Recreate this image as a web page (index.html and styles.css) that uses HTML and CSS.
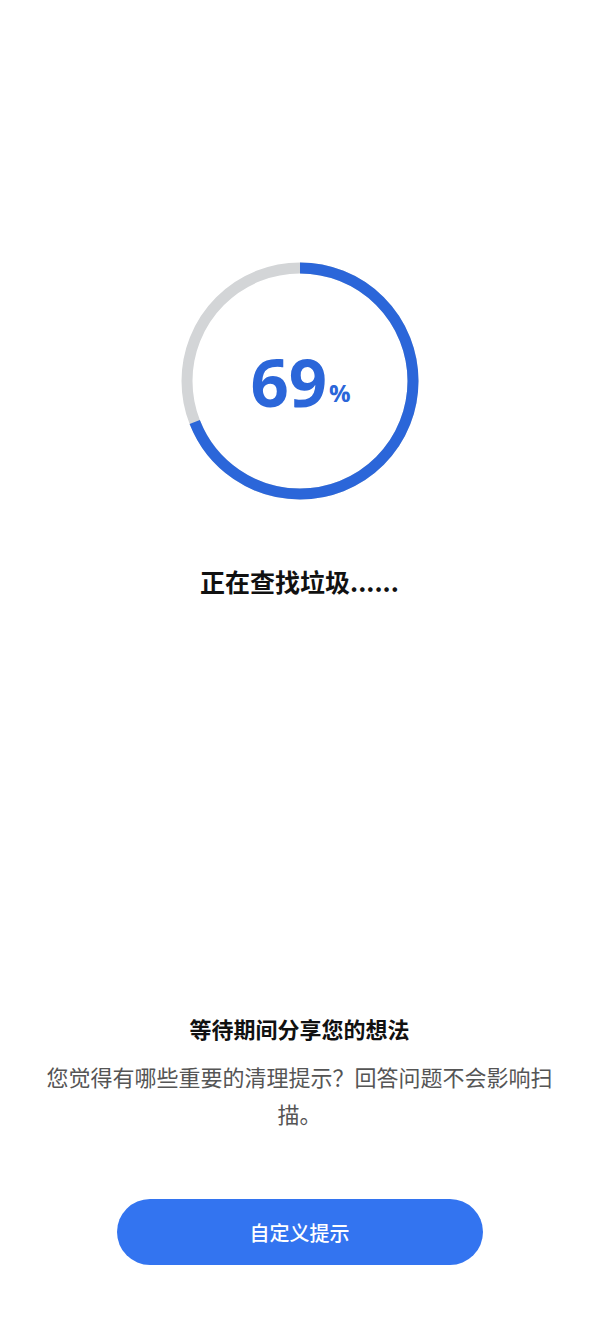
FILE: index.html
```html
<!doctype html>
<html>
    <head>
        <meta charset="utf-8">
        <link rel="stylesheet" href="styles.css">
    </head>
    <body>
        <div class="page">
            <div class="scan">
                <div class="ring">
                    <svg width="238" height="238" viewBox="0 0 238 238">
                        <circle cx="119" cy="119" r="113" class="track"></circle>
                        <circle cx="119" cy="119" r="113" class="bar" style="stroke-dasharray: 490 710;"></circle>
                    </svg>
                    <div class="num">69<span class="pct">%</span></div>
                </div>
                <h1 class="status">正在查找垃圾......</h1>
            </div>
            <div class="tip">
                <h2>等待期间分享您的想法</h2>
                <p>您觉得有哪些重要的清理提示？回答问题不会影响扫描。</p>
            </div>
            <button class="btn">自定义提示</button>
        </div>
    </body>
</html>
```

FILE: styles.css
```css
*{
    margin: 0;
    padding: 0;
    box-sizing: border-box;
}
body{
    background: #fff;
    font-family: "Noto Sans CJK SC", "Noto Sans", sans-serif;
}
.page{
    width: 599px;
    height: 1333px;
    display: flex;
    flex-direction: column;
    align-items: center;
    padding-top: 262px;
}
.scan{
    display: flex;
    flex-direction: column;
    align-items: center;
}
.ring{
    position: relative;
    width: 238px;
    height: 238px;
}
.ring svg{
    display: block;
    transform: rotate(-90deg);
}
.track{
    fill: none;
    stroke: #d3d5d7;
    stroke-width: 11;
}
.bar{
    fill: none;
    stroke: #2b66d9;
    stroke-width: 11;
}
.num{
    position: absolute;
    left: 0;
    top: 0;
    width: 100%;
    height: 100%;
    display: flex;
    align-items: center;
    justify-content: center;
    font-family: "Open Sans", sans-serif;
    font-weight: 700;
    font-size: 67px;
    color: #2b66d9;
    padding-left: 2px;
}
.pct{
    font-size: 24px;
    margin-top: 22px;
    margin-left: 2px;
}
.status{
    margin-top: 61px;
    font-size: 25px;
    font-weight: 700;
    color: #111;
    line-height: 40px;
}
.tip{
    margin-top: 410px;
    text-align: center;
    width: 520px;
}
.tip h2{
    font-size: 22px;
    font-weight: 700;
    color: #111;
    line-height: 34px;
}
.tip p{
    margin-top: 13px;
    font-size: 22px;
    color: #555;
    line-height: 37px;
}
.btn{
    margin-top: 67px;
    width: 366px;
    height: 66px;
    border: none;
    border-radius: 33px;
    background: #3374f0;
    color: #fff;
    font-family: "Noto Sans CJK SC", sans-serif;
    font-weight: 500;
    font-size: 20px;
}
```
